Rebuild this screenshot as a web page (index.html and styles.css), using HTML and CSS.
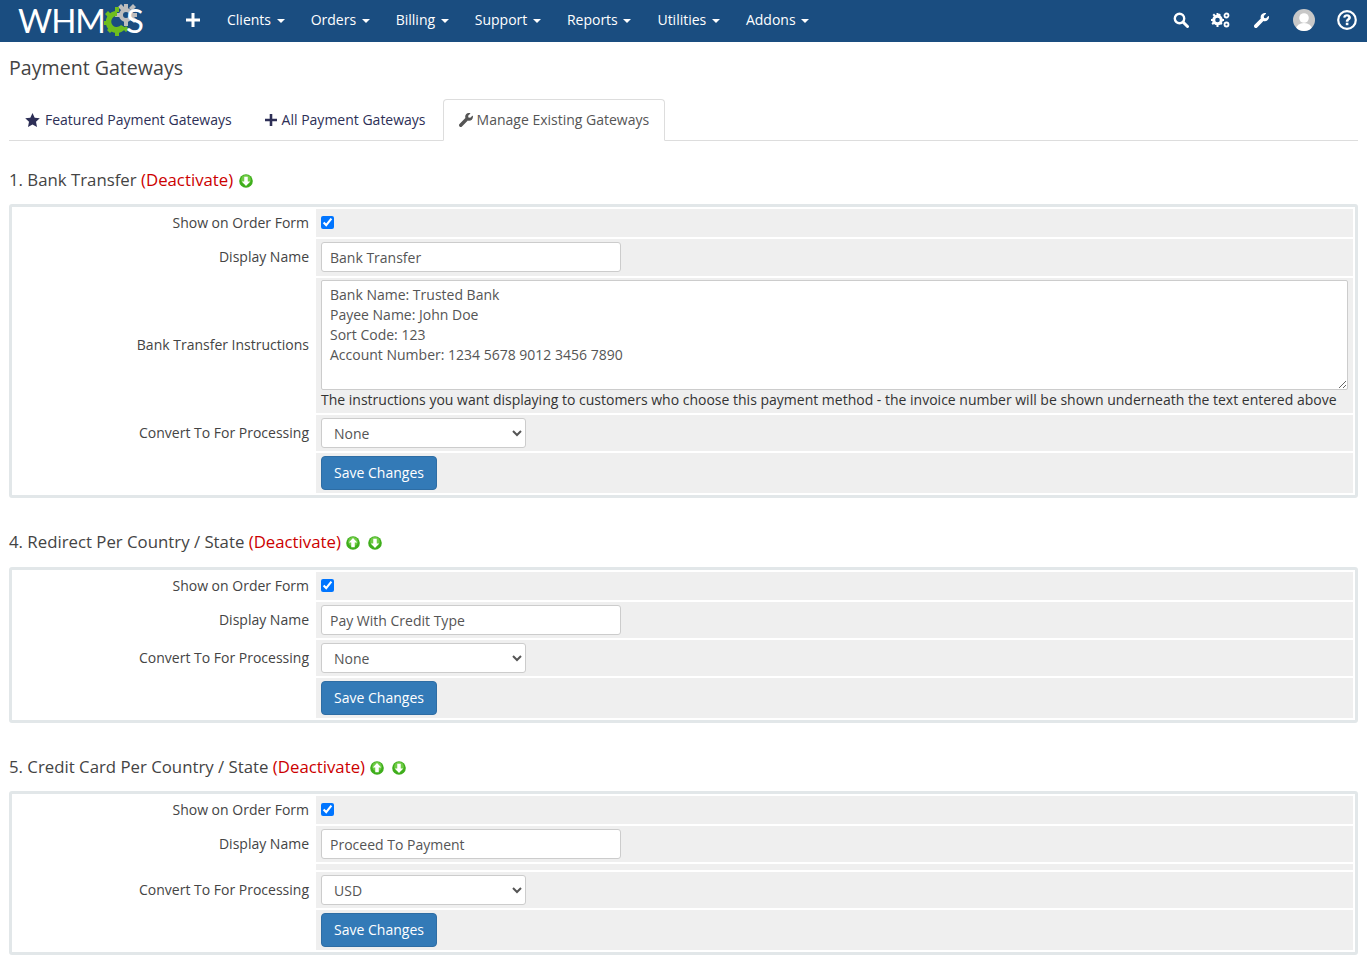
FILE: index.html
```html
<!DOCTYPE html>
<html>
<head>
	<meta charset="utf-8" />
	<title>Payment Gateways</title>
	<link rel="stylesheet" href="styles.css">
</head>
<body>
	<svg class="sprites" width="0" height="0">
		<symbol id="wrench" viewBox="0 0 512 512"><path d="M507.7 109.1c-2.2-9-13.5-12.1-20.1-5.5l-74.4 74.4-67.9-11.3-11.3-67.9 74.4-74.4c6.6-6.6 3.4-17.9-5.7-20.200C355.100-9.500 303.400 4.200 266.800 40.800c-39.100 39.100-50.100 96-34.100 145.500L18.700 400.300c-25 25-25 65.500 0 90.500s65.500 25 90.500 0l213.800-213.800c49.600 16.200 106.500 5.100 145.800-34.200 36.600-36.600 50.300-88.400 38.900-133.700z"/></symbol>
		<symbol id="plus" viewBox="0 0 14 14"><path d="M5.500 0h3v5.500H14v3H8.500V14h-3V8.500H0v-3h5.500z"/></symbol>
		<symbol id="arrow-up" viewBox="0 0 16 16"><circle cx="8" cy="8" r="7.800" fill="#3fae1c"/><circle cx="8" cy="6.500" r="5.500" fill="#8fe060" opacity=".6"/><path d="M8 2.300l4.800 5.100H10v5.400H6V7.400H3.200z" fill="#fff"/></symbol>
		<symbol id="arrow-down" viewBox="0 0 16 16"><circle cx="8" cy="8" r="7.800" fill="#3fae1c"/><circle cx="8" cy="6.500" r="5.500" fill="#8fe060" opacity=".6"/><path d="M8 13.700l4.800-5.100H10V3.200H6v5.400H3.200z" fill="#fff"/></symbol>
	</svg>

	<nav class="topbar">
		<a class="logo">WHM<svg class="logo-gears" width="38" height="34" viewBox="0 0 38 34"><g fill="#bdbdbd"><circle cx="22" cy="11" r="7"/><path d="M20 0h4v5h-4zM20 17h4v5h-4zM11 9h5v4h-5zM28 9h5v4h-5zM14 3l3-3 4 4-3 3zM26 15l3-3 4 4-3 3zM29 0l3 3-4 4-3-3z"/></g><circle cx="22" cy="11" r="3" fill="#1a4d80"/><g fill="#6ebe1e"><path d="M13 7a11 11 0 1 0 9 17l-5-3a5.500 5.500 0 1 1-4-9z"/><path d="M11 3h4v5h-4zM1 10l3-3 3 3-3 3zM0 17h5v4H0zM3 26l3-3 3 3-3 3zM11 27h4v5h-4zM19 25l3-3 3 3-3 3z"/></g></svg><span class="logo-s">S</span></a>
		<a class="nav-add"><svg class="icon" width="14" height="14"><use href="#plus"/></svg></a>
		<ul class="nav-menu">
			<li>Clients <i class="caret"></i></li>
			<li>Orders <i class="caret"></i></li>
			<li>Billing <i class="caret"></i></li>
			<li>Support <i class="caret"></i></li>
			<li>Reports <i class="caret"></i></li>
			<li>Utilities <i class="caret"></i></li>
			<li>Addons <i class="caret"></i></li>
		</ul>
		<div class="nav-tools">
			<svg class="tool-search" width="16" height="16" viewBox="0 0 16 16"><circle cx="6.500" cy="6.500" r="4.700" fill="none" stroke="#fff" stroke-width="2.400"/><path d="M10 10l4.500 4.500" stroke="#fff" stroke-width="3" stroke-linecap="round"/></svg>
			<svg class="tool-cogs" width="19" height="16" viewBox="0 0 19 16"><circle cx="6.500" cy="8" r="3.800" fill="none" stroke="#fff" stroke-width="3"/><path d="M6.500 8m-1-7h2v3h-2zM5.500 12h2v3h-2zM0 7h3v2H0zM10 7h3v2h-3zM1.500 3l1.500-1.500 2 2L3.500 5zM8 11l1.500-1.500 2 2L10 13zM10 3L8.500 1.500l-2 2L8 5zM3.500 11L2 9.500l-1.500 2L2 13z" fill="#fff"/><circle cx="15.500" cy="3.500" r="2" fill="none" stroke="#fff" stroke-width="1.800"/><circle cx="15.500" cy="12.500" r="2" fill="none" stroke="#fff" stroke-width="1.800"/></svg>
			<svg class="tool-wrench" width="15" height="15" fill="#fff"><use href="#wrench"/></svg>
			<svg class="tool-avatar" width="22" height="22" viewBox="0 0 22 22"><clipPath id="avatar-clip"><circle cx="11" cy="11" r="11"/></clipPath><circle cx="11" cy="11" r="11" fill="#c8c8c8"/><g clip-path="url(#avatar-clip)" fill="#fff"><circle cx="11" cy="9" r="4.800"/><ellipse cx="11" cy="20" rx="8" ry="6"/></g></svg>
			<svg class="tool-help" width="20" height="20" viewBox="0 0 20 20"><circle cx="10" cy="10" r="8.800" fill="none" stroke="#fff" stroke-width="2.200"/><path d="M6.200 7.600C6.400 5.300 8 4.300 10 4.300c2.300 0 3.900 1.300 3.900 3.200 0 2.600-2.500 2.500-2.500 4.300H8.800c0-3 2.400-2.900 2.400-4.200 0-.7-.6-1.100-1.300-1.100-.8 0-1.300.5-1.500 1.300z" fill="#fff"/><rect x="8.800" y="12.700" width="2.600" height="2.500" fill="#fff"/></svg>
		</div>
	</nav>

	<main class="content">
		<h1>Payment Gateways</h1>

		<ul class="tabs">
			<li><svg class="tab-star" width="15" height="14" viewBox="0 0 15 14"><path d="M7.500 0l2.200 4.700 5.100.6-3.800 3.500 1 5.100-4.500-2.500L3 13.900l1-5.100L.2 5.300l5.100-.6z"/></svg> Featured Payment Gateways</li>
			<li><svg class="tab-plus" width="12" height="12"><use href="#plus"/></svg> All Payment Gateways</li>
			<li class="active"><svg class="tab-wrench" width="14" height="14"><use href="#wrench"/></svg> Manage Existing Gateways</li>
		</ul>

		<h2 class="first">1. Bank Transfer <a class="deactivate">(Deactivate)</a> <svg class="move" width="14" height="14"><use href="#arrow-down"/></svg></h2>
		<div class="gateway">
			<table>
				<tr class="row-check">
					<td class="label">Show on Order Form</td>
					<td class="field"><input type="checkbox" checked></td>
				</tr>
				<tr class="row-name">
					<td class="label">Display Name</td>
					<td class="field"><input class="text" type="text" value="Bank Transfer"></td>
				</tr>
				<tr class="row-area">
					<td class="label">Bank Transfer Instructions</td>
					<td class="field"><textarea>Bank Name: Trusted Bank
Payee Name: John Doe
Sort Code: 123
Account Number: 1234 5678 9012 3456 7890</textarea><div class="hint">The instructions you want displaying to customers who choose this payment method - the invoice number will be shown underneath the text entered above</div></td>
				</tr>
				<tr class="row-input">
					<td class="label">Convert To For Processing</td>
					<td class="field"><select><option>None</option></select></td>
				</tr>
				<tr class="row-save">
					<td class="label"></td>
					<td class="field"><button>Save Changes</button></td>
				</tr>
			</table>
		</div>

		<h2 class="second">4. Redirect Per Country / State <a class="deactivate">(Deactivate)</a> <svg class="move" width="14" height="14"><use href="#arrow-up"/></svg> <svg class="move" width="14" height="14"><use href="#arrow-down"/></svg></h2>
		<div class="gateway">
			<table>
				<tr class="row-check">
					<td class="label">Show on Order Form</td>
					<td class="field"><input type="checkbox" checked></td>
				</tr>
				<tr class="row-input">
					<td class="label">Display Name</td>
					<td class="field"><input class="text" type="text" value="Pay With Credit Type"></td>
				</tr>
				<tr class="row-input">
					<td class="label">Convert To For Processing</td>
					<td class="field"><select><option>None</option></select></td>
				</tr>
				<tr class="row-save">
					<td class="label"></td>
					<td class="field"><button>Save Changes</button></td>
				</tr>
			</table>
		</div>

		<h2 class="third">5. Credit Card Per Country / State <a class="deactivate">(Deactivate)</a> <svg class="move" width="14" height="14"><use href="#arrow-up"/></svg> <svg class="move" width="14" height="14"><use href="#arrow-down"/></svg></h2>
		<div class="gateway">
			<table>
				<tr class="row-check">
					<td class="label">Show on Order Form</td>
					<td class="field"><input type="checkbox" checked></td>
				</tr>
				<tr class="row-input">
					<td class="label">Display Name</td>
					<td class="field"><input class="text" type="text" value="Proceed To Payment"></td>
				</tr>
				<tr class="row-empty">
					<td class="label"></td>
					<td class="field"></td>
				</tr>
				<tr class="row-input">
					<td class="label">Convert To For Processing</td>
					<td class="field"><select><option>USD</option></select></td>
				</tr>
				<tr class="row-save">
					<td class="label"></td>
					<td class="field"><button>Save Changes</button></td>
				</tr>
			</table>
		</div>
	</main>
</body>
</html>
```

FILE: styles.css
```css
* {
	box-sizing: border-box;
}
body {
	margin: 0;
	background-color: #fff;
	color: #333;
	font-family: "Open Sans", sans-serif;
	font-size: 14px;
	line-height: 20px;
}
ul {
	margin: 0;
	padding: 0;
	list-style: none;
}
.sprites {
	display: block;
	height: 0;
}

.topbar {
	display: flex;
	align-items: center;
	height: 42px;
	padding: 0 10px 2px 18px;
	background-color: #1a4d80;
	color: #fff;
}
.logo {
	display: flex;
	align-items: center;
	width: 126px;
	font-family: "Lato", sans-serif;
	font-size: 33px;
	line-height: 42px;
	letter-spacing: -1px;
}
.logo-gears {
	margin: 2px -16px 0 -1px;
	flex: none;
}
.logo-s {
	width: 18px;
}
.nav-add {
	display: flex;
	margin-left: 42px;
}
.icon, .nav-add svg {
	fill: #fff;
}
.nav-menu {
	display: flex;
	margin-left: 27px;
}
.nav-menu li {
	margin-right: 26px;
	white-space: nowrap;
}
.caret {
	display: inline-block;
	width: 0;
	height: 0;
	margin-left: 2px;
	vertical-align: middle;
	border-top: 4px solid #fff;
	border-left: 4px solid transparent;
	border-right: 4px solid transparent;
}
.nav-tools {
	display: flex;
	align-items: center;
	margin-left: auto;
}
.tool-cogs {
	margin-left: 22px;
}
.tool-wrench {
	margin-left: 24px;
}
.tool-avatar {
	margin-left: 24px;
}
.tool-help {
	margin-left: 22px;
}

.content {
	padding: 0 9px;
}
h1 {
	margin: 0;
	padding-top: 12px;
	font-size: 19.6px;
	font-weight: 400;
	line-height: 27px;
	color: #444;
}
.tabs {
	display: flex;
	height: 42px;
	margin-top: 18px;
	border-bottom: 1px solid #ddd;
	color: #2d2f56;
}
.tabs li {
	display: flex;
	align-items: center;
	gap: 5px;
	height: 42px;
	padding: 0 16px;
	white-space: nowrap;
}
.tabs .active {
	margin-left: 1px;
	gap: 4px;
	color: #555;
	background-color: #fff;
	border: 1px solid #ddd;
	border-bottom-color: #fff;
	border-radius: 4px 4px 0 0;
	padding: 0 15px;
}
.tabs svg {
	fill: #2d2f56;
}
.tabs .tab-plus {
	margin-left: 1px;
}
.tabs .tab-wrench {
	fill: #555;
}

h2 {
	margin: 32px 0 13px;
	font-size: 16.8px;
	font-weight: 400;
	line-height: 23px;
	color: #444;
}
h2.first {
	margin-top: 27px;
}
h2.second {
	margin-bottom: 14px;
}
.deactivate {
	color: #c00;
}
.move {
	vertical-align: -2px;
	margin-left: 1px;
	margin-right: 2px;
}

.gateway {
	border: 3px solid #e2e7e9;
	border-radius: 3px;
	padding: 0 2px;
}
table {
	width: 100%;
	border-collapse: separate;
	border-spacing: 0 2px;
}
td {
	padding: 0;
}
.label {
	width: 302px;
	padding-right: 7px;
	text-align: right;
	color: #444;
}
.row-name .label {
	padding-bottom: 1px;
}
.row-area .label {
	padding-bottom: 2px;
}
.field {
	background-color: #efefef;
}
.row-check .field {
	height: 28px;
	padding: 0 5px 2px;
}
.row-name .field {
	height: 37px;
	padding: 3px 5px 4px;
}
.row-area .field {
	height: 135px;
	padding: 2px 5px 3px;
}
.row-input .field {
	height: 36px;
	padding: 3px 5px;
}
.row-empty .field {
	height: 6px;
}
.row-save .field {
	height: 40px;
	padding: 3px 5px;
}
input[type="checkbox"] {
	display: block;
	width: 13px;
	height: 13px;
	margin: 0;
}
.text, textarea, select {
	font-family: "Open Sans", sans-serif;
	font-size: 14px;
	color: #555;
	background-color: #fff;
	border: 1px solid #ccc;
	border-radius: 3px;
}
.text {
	display: block;
	width: 300px;
	height: 30px;
	padding: 0 8px;
}
textarea {
	display: block;
	width: 100%;
	height: 110px;
	padding: 4px 8px;
	line-height: 20px;
	border-radius: 2px;
}
.hint {
	color: #333;
}
select {
	display: block;
	width: 205px;
	height: 30px;
	padding: 0 8px;
}
button {
	display: block;
	width: 116px;
	height: 34px;
	padding: 0 0 2px;
	font-family: "Open Sans", sans-serif;
	font-size: 14px;
	color: #fff;
	background-color: #337ab7;
	border: 1px solid #2e6da4;
	border-radius: 4px;
}
```
